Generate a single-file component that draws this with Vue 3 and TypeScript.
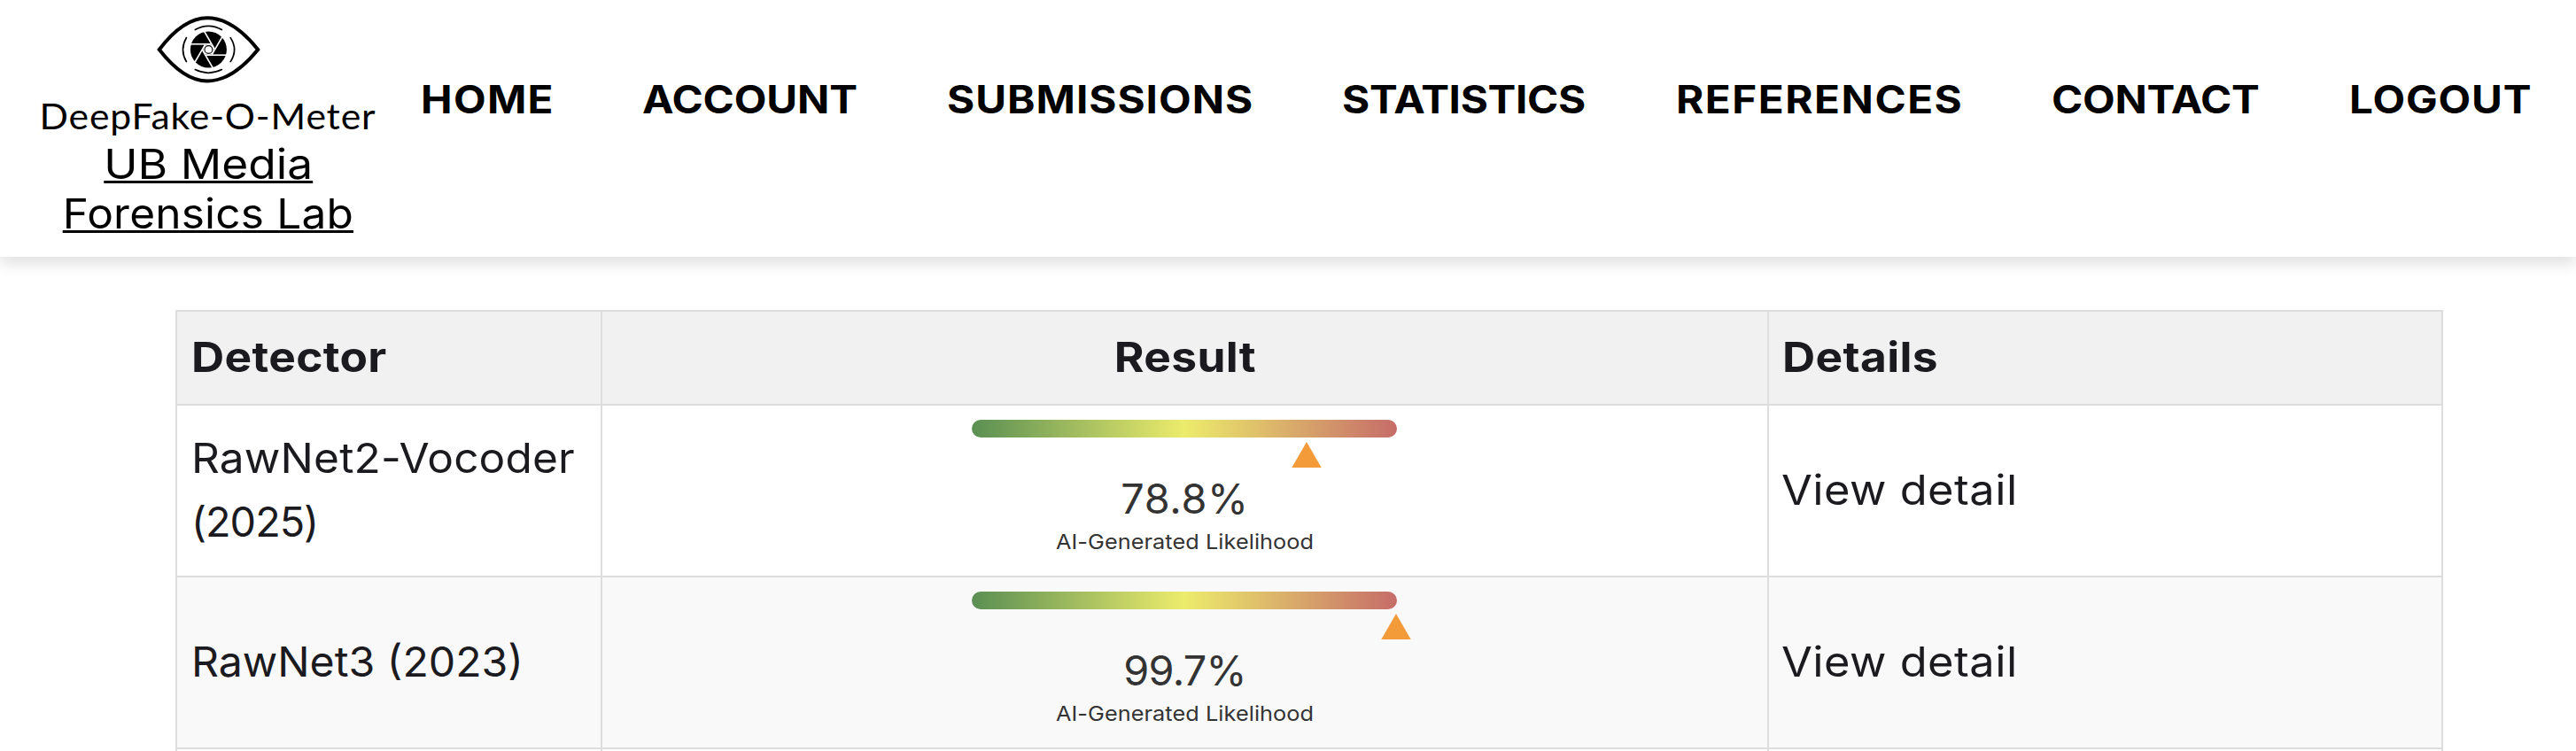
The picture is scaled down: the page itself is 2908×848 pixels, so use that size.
<script setup lang="ts">
interface NavItem {
  label: string
  name: string
}

interface Detection {
  model: string
  year: string
  likelihood: number
}

const navItems: NavItem[] = [
  { label: 'HOME', name: 'home' },
  { label: 'ACCOUNT', name: 'account' },
  { label: 'SUBMISSIONS', name: 'submissions' },
  { label: 'STATISTICS', name: 'statistics' },
  { label: 'REFERENCES', name: 'references' },
  { label: 'CONTACT', name: 'contact' },
  { label: 'LOGOUT', name: 'logout' },
]

const detections: Detection[] = [
  { model: 'RawNet2-Vocoder', year: '(2025)', likelihood: 78.8 },
  { model: 'RawNet3 (2023)', year: '', likelihood: 99.7 },
]

const bladeAngles = [0, 60, 120, 180, 240, 300]
</script>

<template>
  <div class="page">
    <header class="header">
      <div class="brand">
        <svg class="eye" viewBox="0 0 150 90" width="150" height="90" fill="none" stroke="#000">
          <path
            d="M19.8 46 C38 22 56 10.3 74 10.3 S112 22 131.2 46 C112 69.5 92 81.5 74 81.5 S38 69.5 19.8 46 Z"
            stroke-width="4"
          />
          <g stroke-width="1.7" stroke-linecap="round">
            <path d="M60.3 23.6 Q75.3 15 90.3 23.6" />
            <path d="M60.3 68.6 Q75.3 76 90.3 68.6" />
            <path d="M50.4 32.6 Q42.6 46 50.4 59.6" />
            <path d="M100.2 32.6 Q109 46 100.2 59.6" />
          </g>
          <g transform="translate(75.4 46)">
            <circle r="20.5" fill="#000" stroke="none" />
            <path
              v-for="angle in bladeAngles"
              :key="angle"
              d="M-21.5 -6.2 H3"
              :transform="`rotate(${angle})`"
              stroke="#fff"
              stroke-width="1.6"
            />
            <circle r="6" fill="#fff" stroke="none" />
            <circle r="4.4" stroke-width="1.1" />
          </g>
        </svg>
        <div class="brand-name">DeepFake-O-Meter</div>
        <a class="lab">
          <span class="lab-top">UB Media</span>
          <br />
          <span class="lab-bottom">Forensics Lab</span>
        </a>
      </div>
      <nav class="nav">
        <a v-for="item in navItems" :key="item.name" :class="item.name">{{ item.label }}</a>
      </nav>
    </header>

    <main class="content">
      <table class="results">
        <colgroup>
          <col class="col-detector" />
          <col class="col-result" />
          <col class="col-details" />
        </colgroup>
        <thead>
          <tr>
            <th><span>Detector</span></th>
            <th class="centered"><span>Result</span></th>
            <th><span>Details</span></th>
          </tr>
        </thead>
        <tbody>
          <tr v-for="row in detections" :key="row.model">
            <td>
              <span :class="row.year ? 'model-long' : 'model'">{{ row.model }}</span>
              <template v-if="row.year"><br /><span class="year">{{ row.year }}</span></template>
            </td>
            <td class="result">
              <div class="gauge">
                <div class="bar"></div>
                <svg class="pointer" viewBox="0 0 34 29" :style="{ marginLeft: row.likelihood + '%' }">
                  <path d="M17 0 L33.7 29 H0.3 Z" fill="#f39b38" />
                </svg>
              </div>
              <div class="percent" :class="{ tight: row.likelihood > 90 }">{{ row.likelihood }}%</div>
              <div class="caption">AI-Generated Likelihood</div>
            </td>
            <td class="details"><span>View detail</span></td>
          </tr>
          <tr>
            <td></td>
            <td></td>
            <td></td>
          </tr>
        </tbody>
      </table>
    </main>
  </div>
</template>

<style>
body {
  margin: 0;
  background: #fff;
}
</style>

<style scoped>
.page {
  height: 848px;
  overflow: hidden;
  background: #fff;
  font-family: Inter, "Liberation Sans", sans-serif;
  color: #1b1b1f;
}
.header {
  display: flex;
  height: 290px;
  background: #fff;
  box-shadow: 0 8px 16px rgba(0, 0, 0, 0.12);
  color: #000;
}
.brand {
  box-sizing: border-box;
  flex: none;
  width: 470px;
  padding-top: 10px;
  text-align: center;
}
.eye {
  display: block;
  margin: 0 auto;
}
.brand-name {
  margin-top: 6px;
  padding-right: 1px;
  font-family: Lato, sans-serif;
  font-size: 40.3px;
  line-height: 50px;
  letter-spacing: 0.78px;
  transform: scaleX(1.06);
}
.lab {
  display: block;
  margin-top: 1px;
  font-size: 46.8px;
  line-height: 56px;
  color: #000;
}
.lab span {
  display: inline-block;
  text-decoration: underline;
  text-decoration-thickness: 3px;
  text-underline-offset: 2px;
  text-decoration-skip-ink: none;
}
.lab-top {
  transform: scaleX(1.1);
}
.lab-bottom {
  letter-spacing: 0.16px;
  transform: scaleX(1.06);
}
.nav {
  display: grid;
  grid-template-columns: 250px 344px 446px 377px 424px 336px auto;
  margin-left: 5px;
  padding-top: 84px;
  font-size: 43.3px;
  font-weight: 700;
  line-height: 56px;
  white-space: nowrap;
}
.nav a {
  transform: scaleX(1.1);
  transform-origin: left;
}
.home {
  letter-spacing: 1.2px;
}
.account {
  letter-spacing: -0.1px;
}
.submissions {
  letter-spacing: 0.9px;
}
.statistics {
  letter-spacing: -0.28px;
}
.references {
  letter-spacing: 1.4px;
}
.contact {
  letter-spacing: -0.25px;
}
.logout {
  letter-spacing: 0.75px;
}
.content {
  padding: 60px 150px 0 198px;
}
.results {
  width: 2560px;
  table-layout: fixed;
  border-collapse: collapse;
  font-size: 46.8px;
  line-height: 72px;
}
.col-detector {
  width: 480px;
}
.col-result {
  width: 1317px;
}
.col-details {
  width: 761px;
}
th,
td {
  box-sizing: border-box;
  padding: 0 15px 2px;
  border: 2px solid #ddd;
  text-align: left;
  vertical-align: middle;
  white-space: nowrap;
}
th:first-child,
td:first-child {
  padding-left: 16px;
}
td span,
th span {
  display: inline-block;
  transform-origin: left;
}
thead tr {
  height: 106px;
  background: #f1f1f1;
}
tbody tr {
  height: 194px;
}
tbody tr:nth-child(even) {
  background: #f9f9f9;
}
th {
  font-weight: 700;
  letter-spacing: 0.3px;
}
th span {
  transform: scaleX(1.1);
}
.centered {
  text-align: center;
}
.centered span {
  transform-origin: center;
}
.model-long {
  letter-spacing: 0.14px;
  transform: scaleX(1.06);
}
.model {
  transform: scaleX(1.03);
}
.year {
  letter-spacing: -1px;
}
.details {
  padding-left: 14px;
  letter-spacing: 0.45px;
}
.details span {
  transform: scaleX(1.08);
}
.result {
  padding: 16px 0 0;
  vertical-align: top;
  text-align: center;
  color: #333;
}
.gauge {
  width: 480px;
  margin: 0 auto;
  position: relative;
  right: 0.5px;
}
.bar {
  height: 20px;
  border-radius: 10px;
  background: linear-gradient(to right, #5a8f53, #ecec6c 50%, #c66c69);
}
.pointer {
  display: block;
  width: 34px;
  height: 29px;
  margin-top: 5px;
  transform: translateX(-50%);
}
.percent {
  margin-top: 10px;
  line-height: 50px;
  letter-spacing: 0.7px;
}
.percent.tight {
  letter-spacing: -0.76px;
}
.caption {
  margin-top: 6px;
  font-size: 23.4px;
  line-height: 36px;
  letter-spacing: 0.07px;
  transform: scaleX(1.08);
}
</style>
